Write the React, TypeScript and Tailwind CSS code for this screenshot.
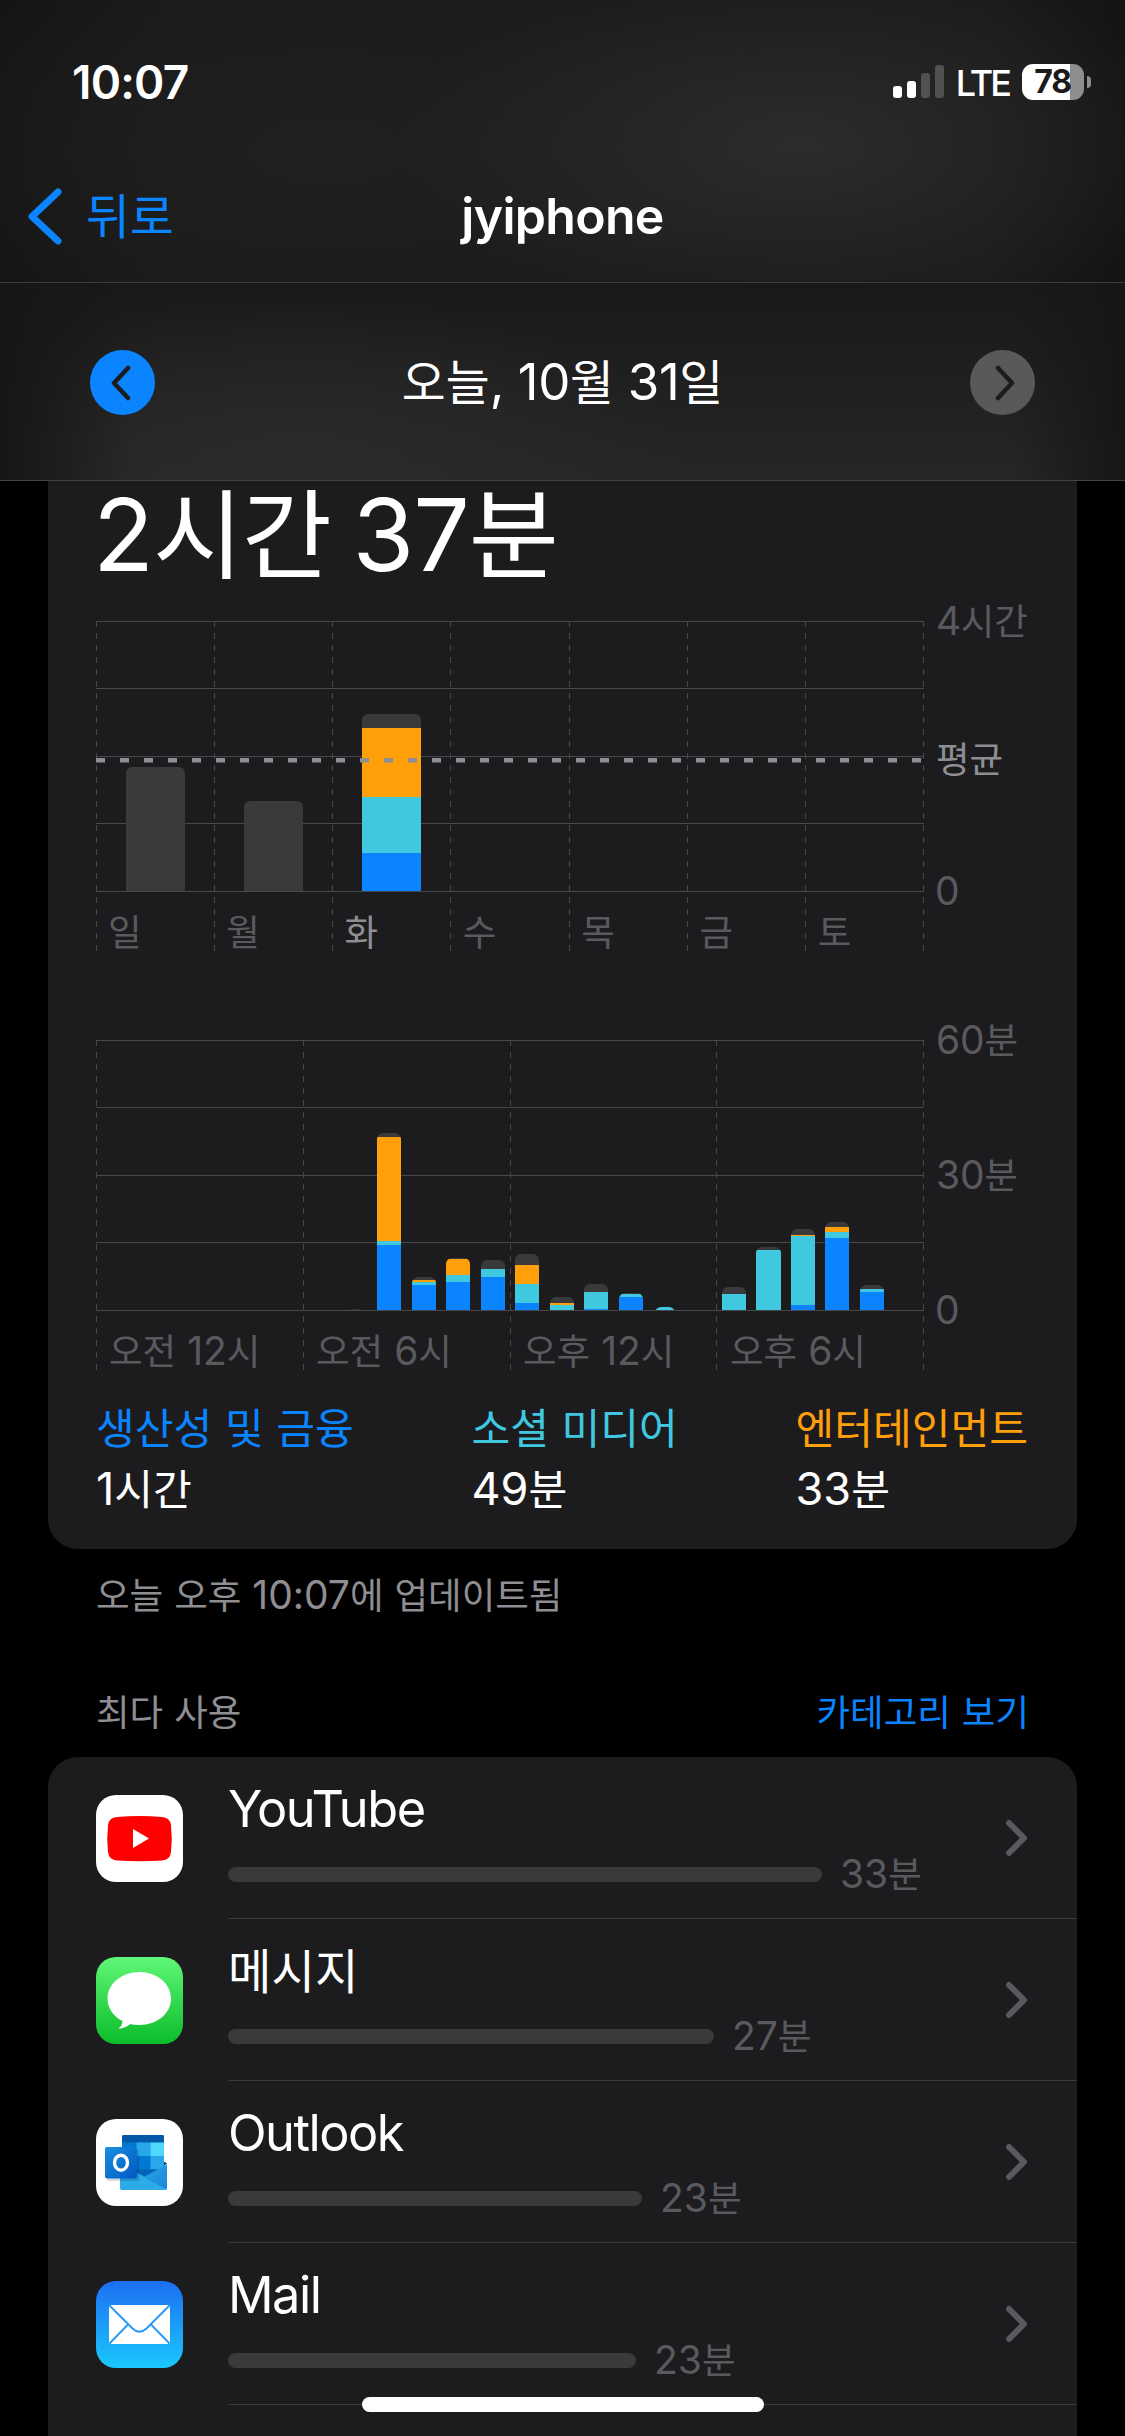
import React from 'react';

const COLORS = {
  productivity: '#0a84ff',
  social: '#40c8e0',
  entertainment: '#ff9f0a',
  other: '#3a3a3c',
};

// segment heights, bottom to top: productivity, social, entertainment, other
type Segments = [number, number, number, number];

interface Bar {
  x: number;
  width: number;
  segments: Segments;
}

const SEGMENT_COLORS = [COLORS.productivity, COLORS.social, COLORS.entertainment, COLORS.other];

const weekBars: Bar[] = [
  { x: 30, width: 59, segments: [0, 0, 0, 124] },
  { x: 148, width: 59, segments: [0, 0, 0, 90] },
  { x: 266, width: 59, segments: [38, 56, 69, 14] },
];

const hourBars: Bar[] = [
  { x: 251, width: 16, segments: [0, 0, 0, 1] },
  { x: 281, width: 24, segments: [65, 4, 104, 4] },
  { x: 316, width: 24, segments: [25, 3, 2, 3] },
  { x: 350, width: 24, segments: [28, 7, 16, 1] },
  { x: 385, width: 24, segments: [33, 8, 0, 9] },
  { x: 419, width: 24, segments: [7, 19, 19, 11] },
  { x: 454, width: 24, segments: [0, 5, 2, 6] },
  { x: 488, width: 24, segments: [1, 17, 0, 8] },
  { x: 523, width: 24, segments: [13, 3, 0, 1] },
  { x: 559, width: 20, segments: [0, 3, 0, 0] },
  { x: 626, width: 24, segments: [0, 16, 0, 7] },
  { x: 660, width: 25, segments: [0, 60, 0, 3] },
  { x: 695, width: 24, segments: [5, 69, 1, 6] },
  { x: 729, width: 24, segments: [72, 6, 5, 5] },
  { x: 764, width: 24, segments: [18, 3, 0, 4] },
];

const days = ['일', '월', '화', '수', '목', '금', '토'];
const hours = ['오전 12시', '오전 6시', '오후 12시', '오후 6시'];

const categories = [
  { name: '생산성 및 금융', time: '1시간', className: 'text-[#0a84ff]' },
  { name: '소셜 미디어', time: '49분', className: 'text-[#40c8e0]' },
  { name: '엔터테인먼트', time: '33분', className: 'text-[#ff9f0a]' },
];

interface LabelProps {
  children: string;
  hangul?: string;
}

// Hangul is set a little smaller than the Latin letters and digits beside it
const Label = ({ children, hangul = 'text-[0.936em] tracking-normal' }: LabelProps) => (
  <>
    {children.split(/([가-힣]+)/).map((run, i) =>
      i % 2 === 1 ? (
        <span key={i} className={hangul}>
          {run}
        </span>
      ) : (
        run
      ),
    )}
  </>
);

const StatusBar = () => (
  <div className="flex h-[150px] items-start justify-between pl-[72px] pr-[34px] pt-[61px]">
    <span className="text-[46px] font-semibold leading-[42px] tracking-[-0.8px]">10:07</span>
    <div className="mt-px flex h-[40px] items-center">
      <svg width="52" height="34" viewBox="0 0 52 34">
        <rect x="0" y="21" width="9" height="12" rx="3" fill="#fff" />
        <rect x="14" y="16" width="9" height="17" rx="3" fill="#fff" />
        <rect x="28" y="8" width="9" height="25" rx="3" fill="#515151" />
        <rect x="42" y="0" width="9" height="33" rx="3" fill="#515151" />
      </svg>
      <span className="ml-[11px] mt-px text-[36px] font-medium leading-[40px] tracking-[-3px]">LTE</span>
      <div className="ml-[13px] flex h-[36px] w-[62px] items-center justify-center rounded-[11px] bg-linear-to-r from-white from-77% to-[#8e8e8e] to-77%">
        <span className="pr-px text-[32px] font-bold leading-[36px] tracking-[-1.2px] text-[#1b1b1b]">78</span>
      </div>
      <div className="ml-[3px] h-[12px] w-[4px] rounded-r-full bg-[#8e8e8e]" />
    </div>
  </div>
);

const NavBar = () => (
  <div className="grid h-[132px] grid-cols-3 items-center">
    <div className="flex items-center gap-[24px] pl-[27px] text-[#0a84ff]">
      <svg width="35" height="57" viewBox="0 0 35 57" fill="none">
        <path d="M31 4 5 28.500 31 53" stroke="currentColor" strokeWidth="7" strokeLinecap="round" strokeLinejoin="round" />
      </svg>
      <span className="text-[51px] leading-[60px]">
        <Label>뒤로</Label>
      </span>
    </div>
    <h1 className="text-center text-[50px] font-semibold leading-[60px] tracking-[-0.7px]">jyiphone</h1>
  </div>
);

const DateBar = () => (
  <div className="flex h-[197px] items-center justify-between px-[90px] pt-[2px]">
    <button className="flex size-[65px] items-center justify-center rounded-full bg-[#0a84ff]">
      <svg width="24" height="36" viewBox="0 0 24 36" fill="none" className="mr-[4px]">
        <path d="M19 3 5 18 19 33" stroke="#1c1c1e" strokeWidth="4.500" strokeLinecap="round" strokeLinejoin="round" />
      </svg>
    </button>
    <span className="text-[51px] leading-[60px] tracking-[-0.4px]">
      <Label>오늘, 10월 31일</Label>
    </span>
    <button className="flex size-[65px] items-center justify-center rounded-full bg-[#59595c]">
      <svg width="24" height="36" viewBox="0 0 24 36" fill="none" className="ml-[4px]">
        <path d="M5 3 19 18 5 33" stroke="#1c1c1e" strokeWidth="4.500" strokeLinecap="round" strokeLinejoin="round" />
      </svg>
    </button>
  </div>
);

interface PlotProps {
  id: string;
  columns: number[];
  bars: Bar[];
  radius: number;
  average?: number;
}

const Plot = ({ id, columns, bars, radius, average }: PlotProps) => (
  <svg width="828" height="330" viewBox="0 0 828 330" className="shrink-0">
    {[0, 67, 135, 202, 270].map((y) => (
      <rect key={y} x="0" y={y} width="828" height="1" fill="#48484a" />
    ))}
    {columns.map((x) => (
      <path key={x} d={`M${x + 0.5} 0V330`} stroke="#48484a" strokeDasharray="6 6" />
    ))}
    {bars.map((bar, i) => {
      const total = bar.segments.reduce((a, b) => a + b, 0);
      let y = 270;
      return (
        <g key={bar.x} clipPath={`url(#${id}-${i})`}>
          <clipPath id={`${id}-${i}`}>
            <rect x={bar.x} y={270 - total} width={bar.width} height={total + 20} rx={radius} />
          </clipPath>
          {bar.segments.map((h, s) => {
            y -= h;
            return <rect key={s} x={bar.x} y={y} width={bar.width} height={h} fill={SEGMENT_COLORS[s]} />;
          })}
        </g>
      );
    })}
    {average !== undefined && (
      <path d={`M0 ${average}H828`} stroke="#8e8e93" strokeWidth="4.500" strokeDasharray="9 15" />
    )}
  </svg>
);

const WeekChart = () => (
  <div className="relative h-[330px] text-[39px] leading-[48px] text-[#5a5a5e]">
    <Plot id="week" columns={[0, 118, 236, 354, 473, 591, 709, 827]} bars={weekBars} radius={6} average={139.3} />
    <div className="absolute left-0 top-[287px] grid w-[828px] grid-cols-7">
      {days.map((day) => (
        <span key={day} className={day === '화' ? 'pl-[12px] text-[#8e8e93]' : 'pl-[12px]'}>
          <Label>{day}</Label>
        </span>
      ))}
    </div>
    <span className="absolute left-[840px] top-[-24px] tracking-[-0.5px]"><Label>4시간</Label></span>
    <span className="absolute left-[840px] top-[114px] text-[#8e8e93]"><Label>평균</Label></span>
    <span className="absolute left-[839px] top-[246px]">0</span>
  </div>
);

const HourChart = () => (
  <div className="relative h-[330px] text-[39px] leading-[48px] text-[#5a5a5e]">
    <Plot id="hour" columns={[0, 207, 414, 620, 827]} bars={hourBars} radius={6} />
    <div className="absolute left-0 top-[287px] grid w-[828px] grid-cols-4">
      {hours.map((hour) => (
        <span key={hour} className="pl-[13px]">
          <Label>{hour}</Label>
        </span>
      ))}
    </div>
    <span className="absolute left-[840px] top-[-24px] tracking-[-0.2px]"><Label>60분</Label></span>
    <span className="absolute left-[840px] top-[111px] tracking-[-0.2px]"><Label>30분</Label></span>
    <span className="absolute left-[839px] top-[246px]">0</span>
  </div>
);

const YouTubeIcon = () => (
  <svg width="87" height="87" viewBox="0 0 87 87">
    <rect width="87" height="87" rx="20" fill="#fff" />
    <path d="M21 22Q43.500 20 66 22Q74 22.500 75 30Q76.500 43.500 75 57Q74 65 66 65.500Q43.500 67 21 65.500Q13 65 12 57Q10.500 43.500 12 30Q13 22.500 21 22Z" fill="#f00" />
    <path d="M37 34 53 43.500 37 53Z" fill="#fff" />
  </svg>
);

const MessagesIcon = () => (
  <svg width="87" height="87" viewBox="0 0 87 87">
    <defs>
      <linearGradient id="messages" x1="0" y1="0" x2="0" y2="1">
        <stop offset="0" stopColor="#5ff777" />
        <stop offset="1" stopColor="#0bbd29" />
      </linearGradient>
    </defs>
    <rect width="87" height="87" rx="20" fill="url(#messages)" />
    <path d="M43.500 15C61 15 75 26.500 75 41.500S61 68 43.500 68C40 68 37 67.600 34.500 67C31 69.500 27 71.500 22.500 71.800C25 69.500 26.500 67 26.500 64C17.500 59.500 11.500 51 11.500 41.500C11.500 26.500 26 15 43.500 15Z" fill="#fff" />
  </svg>
);

const OutlookIcon = () => (
  <svg width="87" height="87" viewBox="0 0 87 87">
    <defs>
      <linearGradient id="outlook-box" x1="0" y1="0" x2="1" y2="1">
        <stop offset="0" stopColor="#1a8fe0" />
        <stop offset="1" stopColor="#0058c4" />
      </linearGradient>
      <linearGradient id="outlook-flap" x1="0" y1="0" x2="1" y2="1">
        <stop offset="0" stopColor="#2ba9ea" />
        <stop offset="1" stopColor="#1a86d8" />
      </linearGradient>
    </defs>
    <rect width="87" height="87" rx="20" fill="#fff" />
    <path d="M68 42.500 71 44.500 68 47Z" fill="#123b6d" />
    <rect x="26" y="16" width="42" height="40" rx="1.500" fill="#0078d4" />
    <path d="M26 23.500V18Q26 16 28 16H66Q68 16 68 18V23.500Z" fill="#0358a7" />
    <rect x="40.500" y="23.500" width="14" height="13.500" fill="#28a8ea" />
    <rect x="54.500" y="23.500" width="13.500" height="13.500" fill="#50d9ff" />
    <rect x="54.500" y="37" width="13.500" height="13.500" fill="#28a8ea" />
    <path d="M26 50.500H62L50 58H26Z" fill="#0364b8" />
    <path d="M71 45.500V69Q71 71 69 71H40V53L48.500 57.500Z" fill="url(#outlook-flap)" />
    <path d="M24 46 70.500 70.300Q70 71 69 71H26Q24 71 24 69Z" fill="#2dabe9" />
    <rect x="11" y="30" width="32" height="32" rx="2" fill="#000" opacity="0.15" />
    <rect x="9" y="28" width="32" height="31.500" rx="2" fill="url(#outlook-box)" />
    <ellipse cx="25" cy="43.700" rx="6.500" ry="7.500" fill="none" stroke="#fff" strokeWidth="3.400" />
  </svg>
);

const MailIcon = () => (
  <svg width="87" height="87" viewBox="0 0 87 87">
    <defs>
      <linearGradient id="mail" x1="0" y1="0" x2="0" y2="1">
        <stop offset="0" stopColor="#1d6ff2" />
        <stop offset="1" stopColor="#1ac8fc" />
      </linearGradient>
    </defs>
    <rect width="87" height="87" rx="20" fill="url(#mail)" />
    <rect x="13" y="24" width="61" height="39" rx="2.500" fill="#fff" />
    <g fill="none" stroke="#2499f8" strokeWidth="1.800">
      <path d="M13.500 24.500 36.500 47.500Q43.500 54 50.500 47.500L73.500 24.500" />
      <path d="M13.500 62.500 32 43.500M73.500 62.500 55 43.500" />
    </g>
  </svg>
);

interface AppUsage {
  name: string;
  time: string;
  width: number;
  icon: React.ReactNode;
}

const apps: AppUsage[] = [
  { name: 'YouTube', time: '33분', width: 594, icon: <YouTubeIcon /> },
  { name: '메시지', time: '27분', width: 486, icon: <MessagesIcon /> },
  { name: 'Outlook', time: '23분', width: 414, icon: <OutlookIcon /> },
  { name: 'Mail', time: '23분', width: 408, icon: <MailIcon /> },
];

const AppRow = ({ app }: { app: AppUsage }) => (
  <li className="flex h-[162px] pl-[48px]">
    <div className="mr-[45px] flex shrink-0 items-center">{app.icon}</div>
    <div className="flex flex-1 items-center border-b border-[#3a3a3c] pr-[49px]">
      <div className="flex-1 pt-px">
        <div className="h-[66px] text-[50.5px] leading-[62px] tracking-[-1.5px]">
          <Label>{app.name}</Label>
        </div>
        <div className="mt-[7px] flex h-[48px] items-center gap-[18px]">
          <div className="h-[15px] rounded-full bg-[#3a3a3c]" style={{ width: app.width }} />
          <span className="text-[39px] leading-[48px] text-[#5a5a5e]">
            <Label>{app.time}</Label>
          </span>
        </div>
      </div>
      <svg width="23" height="38" viewBox="0 0 23 38" fill="none">
        <path d="M4 4 19 19 4 34" stroke="#5a5a5e" strokeWidth="6" strokeLinecap="round" strokeLinejoin="round" />
      </svg>
    </div>
  </li>
);

const App: React.FC = () => {
  return (
    <div className="relative h-[2436px] w-[1125px] overflow-hidden bg-black font-['Inter','Noto_Sans_CJK_KR',sans-serif] text-white">
      <header className="bg-[#1a1a1a]">
        <div className="h-[283px] border-b border-[#3c3c3d] bg-[radial-gradient(ellipse_400px_190px_at_800px_145px,#2c2c2d,transparent),radial-gradient(ellipse_500px_200px_at_330px_150px,#202020,transparent),linear-gradient(to_right,#141414,#1a1a1a_15%,#1a1a1a_88%,#141414)]">
          <StatusBar />
          <NavBar />
        </div>
        <div className="h-[198px] border-b border-[#424243] bg-[linear-gradient(to_right,#161616,transparent_12%,transparent_90%,#161616),radial-gradient(ellipse_400px_190px_at_300px_200px,#2b2b2d,transparent),linear-gradient(to_bottom,#191919,#262626)]">
          <DateBar />
        </div>
      </header>

      <main className="px-[48px]">
        <section className="h-[1068px] rounded-b-[30px] bg-[#1c1c1e] px-[48px]">
          <h2 className="-ml-[3px] h-[140px] text-[100px] leading-[107px] tracking-[-1px] [word-spacing:-5px]">
            <Label hangul="text-[98px] tracking-[-1.5px]">2시간 37분</Label>
          </h2>
          <WeekChart />
          <div className="mt-[89px]">
            <HourChart />
          </div>
          <div className="mt-[28px] flex justify-between pr-px text-[45px] leading-[60px]">
            {categories.map((category) => (
              <div key={category.name}>
                <div className={category.className}>
                  <Label>{category.name}</Label>
                </div>
                <div>
                  <Label>{category.time}</Label>
                </div>
              </div>
            ))}
          </div>
        </section>

        <p className="mt-[21px] px-[48px] text-[39px] leading-[50px] text-[#8e8e93]">
          <Label>오늘 오후 10:07에 업데이트됨</Label>
        </p>

        <div className="mt-[66px] flex justify-between px-[48px] text-[39px] leading-[50px] text-[#8e8e93]">
          <span>
            <Label>최다 사용</Label>
          </span>
          <a className="text-[#0a84ff]">
            <Label>카테고리 보기</Label>
          </a>
        </div>

        <ul className="mt-[19px] h-[740px] rounded-t-[30px] bg-[#1c1c1e]">
          {apps.map((app) => (
            <AppRow key={app.name} app={app} />
          ))}
          <li className="pl-[180px] pt-[22px] text-[51px] leading-[62px]">
            <Label>카카오톡</Label>
          </li>
        </ul>
      </main>

      <div className="absolute left-[362px] top-[2397px] h-[15px] w-[402px] rounded-full bg-white" />
    </div>
  );
};

export default App;
